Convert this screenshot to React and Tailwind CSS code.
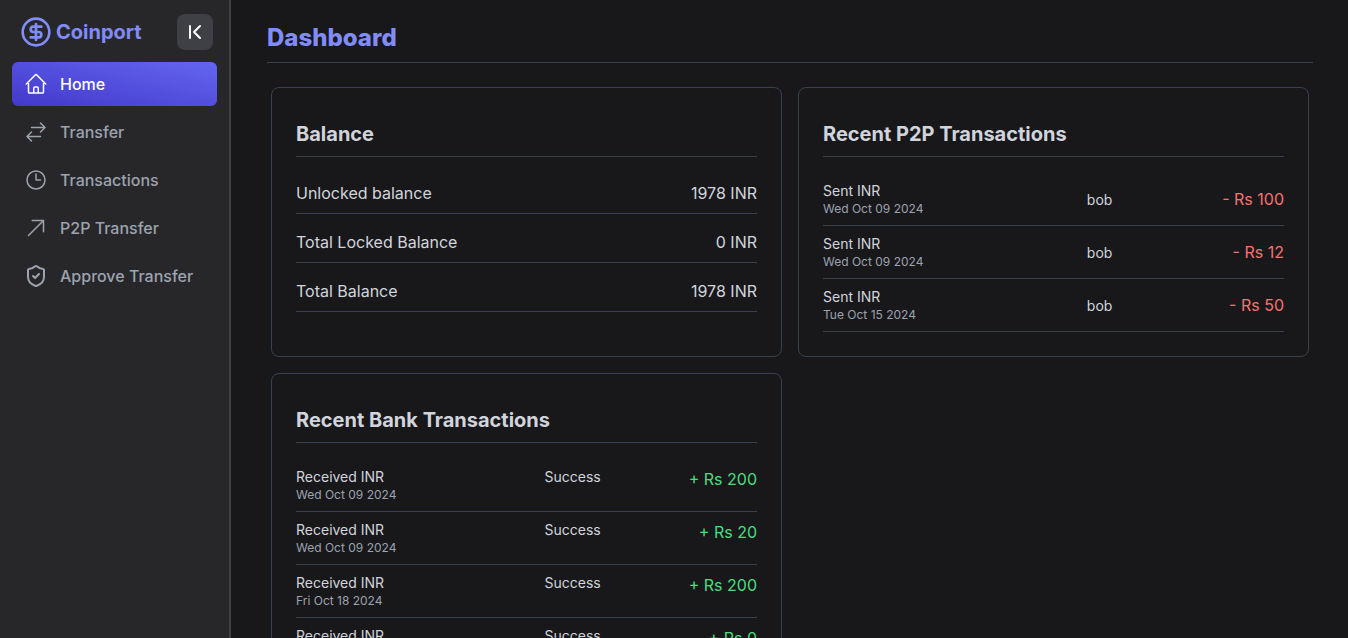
import { ChevronFirst, CircleDollarSign, ShieldCheck } from "lucide-react";

function Outline({ d }) {
  return (
    <svg className="size-6 shrink-0" viewBox="0 0 24 24" fill="none" stroke="currentColor" strokeWidth="1.5" strokeLinecap="round" strokeLinejoin="round">
      <path d={d} />
    </svg>
  );
}

const HOME =
  "m2.25 12 8.954-8.955c.44-.439 1.152-.439 1.591 0L21.75 12M4.5 9.75v10.125c0 .621.504 1.125 1.125 1.125H9.75v-4.875c0-.621.504-1.125 1.125-1.125h2.25c.621 0 1.125.504 1.125 1.125V21h4.125c.621 0 1.125-.504 1.125-1.125V9.75M8.25 21h8.25";
const SWAP = "M7.5 21 3 16.5m0 0L7.5 12M3 16.5h13.5m0-13.5L21 7.5m0 0L16.5 12M21 7.5H7.5";
const CLOCK = "M12 6v6h4.5m4.5 0a9 9 0 1 1-18 0 9 9 0 0 1 18 0Z";
const ARROW = "m4.5 19.5 15-15m0 0H8.25m11.25 0v11.25";

const nav = [
  { label: "Home", icon: <Outline d={HOME} />, active: true },
  { label: "Transfer", icon: <Outline d={SWAP} /> },
  { label: "Transactions", icon: <Outline d={CLOCK} /> },
  { label: "P2P Transfer", icon: <Outline d={ARROW} /> },
  { label: "Approve Transfer", icon: <ShieldCheck size={24} className="shrink-0" /> },
];

const balances = [
  ["Unlocked balance", "1978 INR"],
  ["Total Locked Balance", "0 INR"],
  ["Total Balance", "1978 INR"],
];

const p2p = [
  ["Wed Oct 09 2024", "bob", "- Rs 100"],
  ["Wed Oct 09 2024", "bob", "- Rs 12"],
  ["Tue Oct 15 2024", "bob", "- Rs 50"],
];

const bank = [
  ["Wed Oct 09 2024", "Success", "+ Rs 200"],
  ["Wed Oct 09 2024", "Success", "+ Rs 20"],
  ["Fri Oct 18 2024", "Success", "+ Rs 200"],
  ["Fri Oct 18 2024", "Success", "+ Rs 0"],
];

function Sidebar() {
  return (
    <aside className="flex h-full w-[231px] shrink-0 flex-col border-r-2 border-[#3f3f46] bg-[#27272a] px-3 pt-3.5">
      <div className="mb-3 flex items-center justify-between pr-1 pl-2">
        <div className="flex items-center gap-1 text-[#818cf8]">
          <CircleDollarSign size={32} />
          <span className="text-xl font-bold">Coinport</span>
        </div>
        <button className="rounded-lg bg-[#3f3f46] p-1.5 text-white">
          <ChevronFirst size={24} />
        </button>
      </div>
      <nav className="flex flex-col gap-1">
        {nav.map((item) => (
          <a
            key={item.label}
            className={
              item.active
                ? "flex h-11 items-center gap-3 rounded-md bg-[linear-gradient(to_top_right,#4338ca,#6366f1)] px-3 font-medium text-white"
                : "flex h-11 items-center gap-3 rounded-md px-3 font-medium text-[#9ca3af]"
            }
          >
            {item.icon}
            <span>{item.label}</span>
          </a>
        ))}
      </nav>
    </aside>
  );
}

function Card({ title, children }) {
  return (
    <section className="rounded-lg border border-[#374151] p-6">
      <h2 className="border-b border-[#374151] pt-2 pb-2 text-xl font-bold text-[#d1d5db]">{title}</h2>
      {children}
    </section>
  );
}

export default function App() {
  return (
    <div className="flex h-screen overflow-hidden bg-[#18181b] font-['Inter',sans-serif]">
      <Sidebar />
      <main className="min-w-0 flex-1 overflow-hidden pt-[22px] pr-[35px] pl-9">
        <h1 className="border-b border-[#374151] pb-2 text-2xl font-extrabold text-[#818cf8]">Dashboard</h1>
        <div className="grid grid-cols-2 gap-4 px-1 pt-6">
          <Card title="Balance">
            <div className="pt-2 text-[#d1d5db]">
              {balances.map(([label, value]) => (
                <div key={label} className="flex justify-between border-b border-[#374151] pt-4 pb-2">
                  <span>{label}</span>
                  <span>{value}</span>
                </div>
              ))}
            </div>
          </Card>
          <Card title="Recent P2P Transactions">
            <div className="pt-4 text-[#d1d5db]">
              {p2p.map(([date, name, amount], i) => (
                <div key={i} className="grid grid-cols-5 items-center border-b border-[#374151] py-2">
                  <div className="col-span-2">
                    <div className="text-sm">Sent INR</div>
                    <div className="text-xs text-[#9ca3af]">{date}</div>
                  </div>
                  <div className="col-span-2 text-center">
                    <span className="text-sm">{name}</span>
                  </div>
                  <div className="text-right text-[#f87171]">{amount}</div>
                </div>
              ))}
            </div>
          </Card>
          <Card title="Recent Bank Transactions">
            <div className="pt-4 text-[#d1d5db]">
              {bank.map(([date, status, amount], i) => (
                <div key={i} className="grid grid-cols-5 border-b border-[#374151] py-2">
                  <div className="col-span-2">
                    <div className="text-sm">Received INR</div>
                    <div className="text-xs text-[#9ca3af]">{date}</div>
                  </div>
                  <div className="col-span-2 text-center text-sm">{status}</div>
                  <div className="text-right text-[#4ade80]">{amount}</div>
                </div>
              ))}
            </div>
          </Card>
        </div>
      </main>
    </div>
  );
}
